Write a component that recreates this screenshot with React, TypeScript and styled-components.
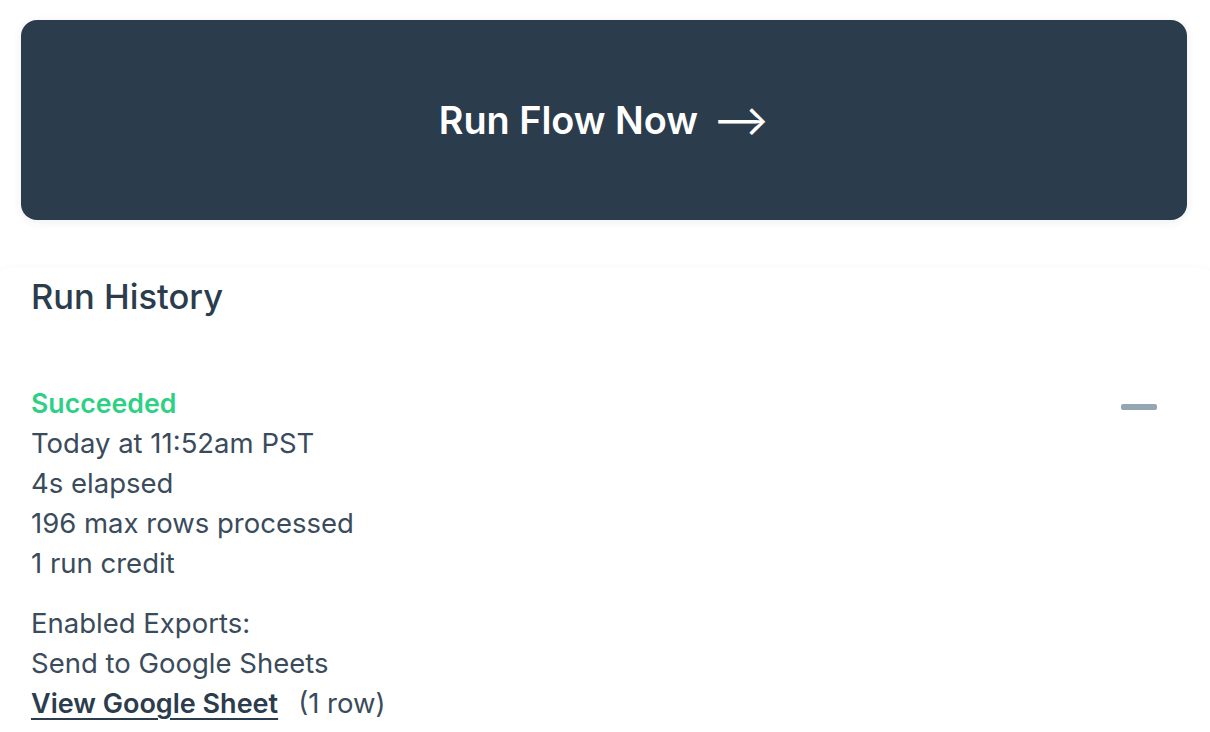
import styled, { createGlobalStyle } from 'styled-components'

const GlobalStyle = createGlobalStyle`
  html, body {
    margin: 0;
    padding: 0;
    background: #ffffff;
    font-family: Inter, 'Noto Sans', sans-serif;
    color: #2b3c4d;
    overflow: hidden;
  }
`

const Page = styled.div`
  width: 1210px;
  height: 732px;
  padding-top: 20px;
  box-sizing: border-box;
  display: flex;
  flex-direction: column;
`

const RunButton = styled.button`
  margin: 0 23px 0 21px;
  height: 200px;
  border: none;
  border-radius: 16px;
  background: #2b3c4d;
  box-shadow: 0 2px 10px rgba(30, 45, 60, 0.08);
  color: #ffffff;
  font-family: Inter, sans-serif;
  font-size: 37.8px;
  font-weight: 600;
  display: flex;
  align-items: center;
  justify-content: center;
  gap: 15px;
  cursor: pointer;
`

const Arrow = styled.span`
  font-size: 42px;
  font-weight: 400;
  line-height: 1;
`

const HistoryCard = styled.section`
  margin: 48px -6px 0 -6px;
  padding: 9px 38px 0 37px;
  flex: 1;
  border-radius: 16px 16px 0 0;
  background: #ffffff;
  box-shadow: 0 -1px 6px rgba(200, 215, 230, 0.12);
`

const Title = styled.h2`
  margin: 0;
  font-size: 34.5px;
  line-height: 40px;
  font-weight: 500;
  color: #2b3c4d;
`

const RunItem = styled.div`
  margin-top: 66px;
  display: flex;
  justify-content: space-between;
  align-items: flex-start;
`

const RunInfo = styled.div`
  display: flex;
  flex-direction: column;
`

const Status = styled.div`
  font-size: 26.7px;
  line-height: 40px;
  font-weight: 600;
  color: #2fcf86;
`

const Line = styled.div`
  font-size: 27.5px;
  line-height: 40px;
  color: #3a4b5c;
`

const Exports = styled.div`
  margin-top: 20px;
  display: flex;
  flex-direction: column;
`

const SheetLink = styled.a`
  font-size: 27px;
  color: #2b3c4d;
  font-weight: 600;
  text-decoration: underline;
  text-underline-offset: 5px;
  text-decoration-thickness: 2px;
`

const RowCount = styled.span`
  margin-left: 20px;
`

const Collapse = styled.button`
  margin: 21px 21px 0 0;
  width: 36px;
  height: 6px;
  padding: 0;
  border: none;
  border-radius: 2px;
  background: #94a6b2;
`

function App() {
  return (
    <Page>
      <GlobalStyle />
      <RunButton type='button'>
        Run Flow Now <Arrow>⟶</Arrow>
      </RunButton>
      <HistoryCard>
        <Title>Run History</Title>
        <RunItem>
          <RunInfo>
            <Status>Succeeded</Status>
            <Line>Today at 11:52am PST</Line>
            <Line>4s elapsed</Line>
            <Line>196 max rows processed</Line>
            <Line>1 run credit</Line>
            <Exports>
              <Line>Enabled Exports:</Line>
              <Line>Send to Google Sheets</Line>
              <Line>
                <SheetLink href='#'>View Google Sheet</SheetLink>
                <RowCount>(1 row)</RowCount>
              </Line>
            </Exports>
          </RunInfo>
          <Collapse aria-label='collapse' />
        </RunItem>
      </HistoryCard>
    </Page>
  )
}

export default App
